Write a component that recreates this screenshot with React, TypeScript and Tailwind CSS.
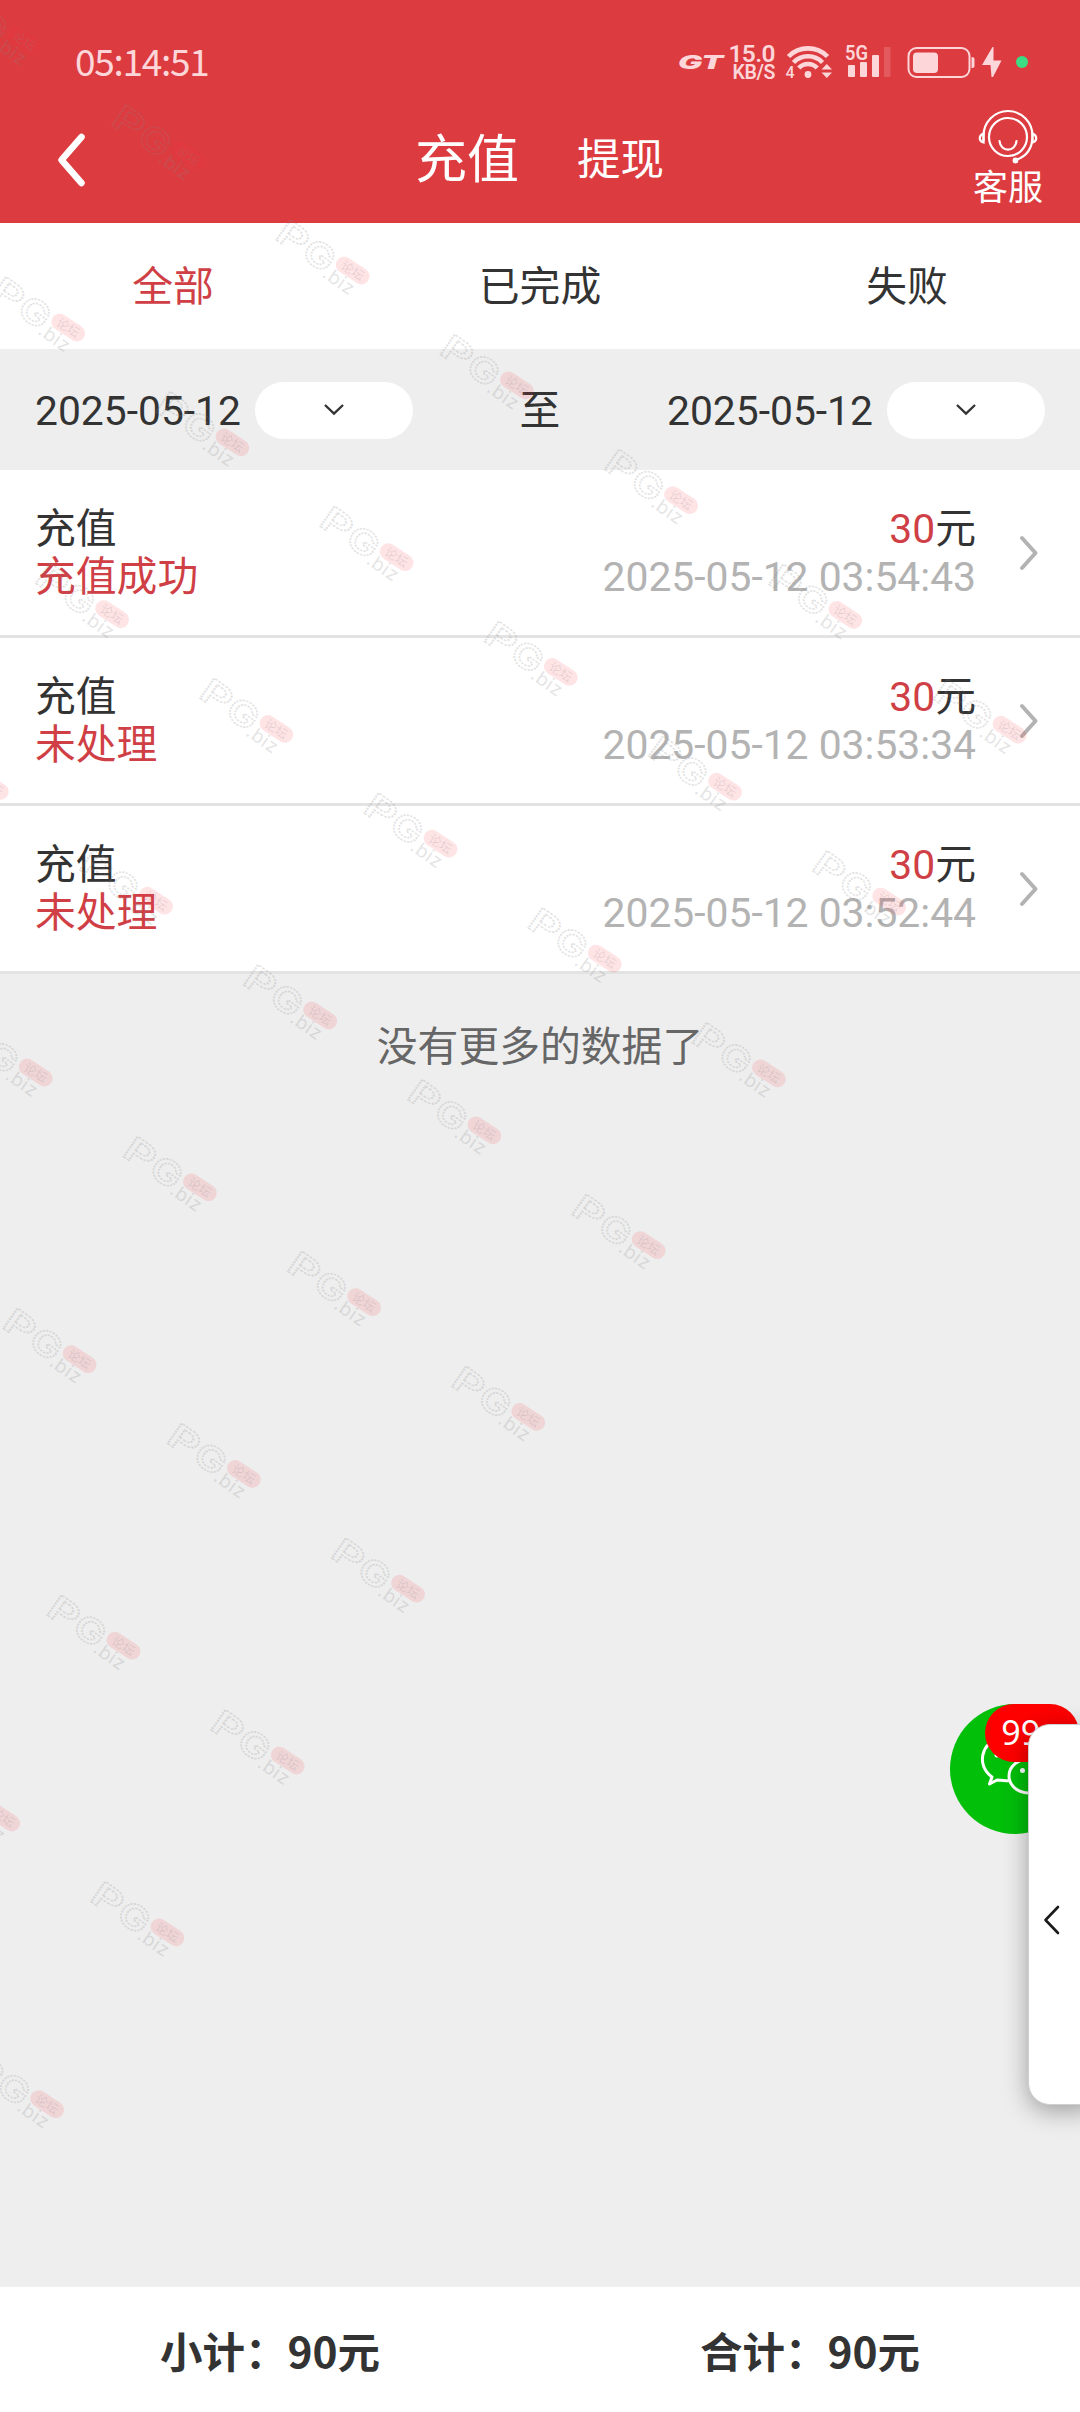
import { ReactNode } from 'react';

const records = [
  { type: '充值', status: '充值成功', amount: 30, time: '2025-05-12 03:54:43' },
  { type: '充值', status: '未处理', amount: 30, time: '2025-05-12 03:53:34' },
  { type: '充值', status: '未处理', amount: 30, time: '2025-05-12 03:52:44' },
];

const StatusBar = () => {
  return (
    <div className="flex h-[124px] items-center pl-[75px] pr-[52px] text-[#fcd6d8]">
      <div className="-mt-[3px] flex-1 font-['Noto_Sans_CJK_SC',sans-serif] text-[37px] leading-none tracking-[-1.300px]">
        05:14:51
      </div>
      <svg width="48" height="40" viewBox="0 0 48 40" fill="currentColor">
        <text
          transform="translate(0 27) scale(1.62 1)"
          fontFamily="Inter, sans-serif"
          fontSize="18.5"
          fontWeight="900"
          fontStyle="italic"
          textLength="28"
          lengthAdjust="spacingAndGlyphs"
        >
          GT
        </text>
      </svg>
      <div className="flex w-[50px] flex-col items-end pr-px font-[Roboto,sans-serif] font-semibold">
        <span className="text-[24.500px] leading-[21px] tracking-[-0.6px]">15.0</span>
        <span className="text-[19.500px] leading-[18px] tracking-[-0.4px]">KB/S</span>
      </div>
      <svg className="ml-[8px]" width="50" height="40" viewBox="0 0 50 40" fill="currentColor">
        <g fill="none" stroke="currentColor" strokeWidth="4.6">
          <path d="M4.5 14.5 A27.5 27.5 0 0 1 43.5 14.5" />
          <path d="M9.5 20.5 A20 20 0 0 1 38.5 20.5" />
          <path d="M14.8 26 A12.5 12.5 0 0 1 33.2 26" />
        </g>
        <circle cx="24" cy="32.5" r="3.4" />
        <text x="1.5" y="35.5" fontFamily="Roboto, sans-serif" fontSize="16" fontWeight="500">4</text>
        <path d="M37.5 27.5 L42.8 22 L48 27.5 Z" />
        <path d="M37.5 30.5 L42.8 36 L48 30.5 Z" />
      </svg>
      <svg className="ml-[11px]" width="50" height="40" viewBox="0 0 50 40" fill="currentColor">
        <text
          x="0"
          y="18"
          fontFamily="Roboto, sans-serif"
          fontSize="20"
          fontWeight="600"
          textLength="23"
          lengthAdjust="spacingAndGlyphs"
        >
          5G
        </text>
        <rect x="3" y="23" width="7" height="12" rx="1" />
        <rect x="15" y="20" width="7" height="15" rx="1" />
        <rect x="27" y="13" width="7" height="22" rx="1" />
        <rect x="39" y="5" width="6.500" height="30" rx="1" opacity="0.2" />
      </svg>
      <svg className="ml-[12px]" width="70" height="40" viewBox="0 0 70 40" fill="currentColor">
        <rect x="1.500" y="6" width="61" height="29" rx="8" fill="none" stroke="currentColor" strokeWidth="2" />
        <rect x="6" y="10.500" width="25" height="20.500" rx="4" />
        <path d="M64.500 15 Q67.500 15 67.500 17 V24 Q67.500 26 64.500 26 Z" />
      </svg>
      <svg className="ml-[4px]" width="24" height="40" viewBox="0 0 24 40" fill="currentColor">
        <path d="M11.500 5 L1 23 H9.500 L10.500 35 H12 L20.500 18.500 H12.500 L12.500 5 Z" />
      </svg>
      <div className="ml-[11px] h-3 w-3 rounded-full bg-[#3ddc84]"></div>
    </div>
  );
};

const Header = () => {
  return (
    <header className="h-[223px] bg-[#dc3b40] text-white">
      <StatusBar />
      <div className="-mt-[21px] flex h-[114px] items-center">
        <div className="w-[415px] pl-[54px]">
          <svg width="34" height="58" viewBox="0 0 34 58" fill="none" stroke="currentColor" strokeWidth="6.500" strokeLinecap="round" strokeLinejoin="round">
            <path d="M27.500 6 L7.500 29 L27.500 52" />
          </svg>
        </div>
        <div className="flex items-center gap-[58px] pt-[2px]">
          <span className="text-[52px] leading-none">充值</span>
          <span className="text-[43.500px] leading-none">提现</span>
        </div>
        <div className="flex flex-1 flex-col items-end pr-[36px]">
          <div className="-mt-[2px] flex w-[72px] flex-col items-center">
            <svg width="60" height="56" viewBox="0 0 60 56" fill="none" stroke="currentColor" strokeWidth="2.200" strokeLinecap="round">
              <circle cx="30" cy="28" r="19" />
              <path d="M5.500 32 V27 A24.500 25 0 0 1 54.500 27 C54.500 40 48 47.500 38 51" />
              <path d="M5.500 24.500 C0.500 26.500 0.500 32 5.500 33.500 Z" />
              <path d="M54.500 24.500 C59.500 26.500 59.500 32 54.500 33.500 Z" />
              <path d="M21.500 32 C22.500 43.500 37.500 43.500 38.500 32" />
              <circle cx="37.500" cy="51.500" r="1.800" fill="currentColor" />
            </svg>
            <span className="mt-1 text-[35px] leading-[40px]">客服</span>
          </div>
        </div>
      </div>
    </header>
  );
};

const Tabs = () => {
  return (
    <div className="grid h-[126px] grid-cols-[346px_388px_346px] items-center bg-white pt-[2px] text-center">
      <span className="text-[#cf3f45]">全部</span>
      <span>已完成</span>
      <span>失败</span>
    </div>
  );
};

const DatePicker = ({ value }: { value: string }) => {
  return (
    <div className="flex items-center pt-px">
      <span className="w-[220px] pt-[2px]">{value}</span>
      <div className="flex h-[57px] w-[158px] items-center justify-center rounded-full bg-white">
        <svg width="22" height="14" viewBox="0 0 22 14" fill="none" stroke="#333" strokeWidth="2.400">
          <path d="M2 2 L11 10.500 L20 2" />
        </svg>
      </div>
    </div>
  );
};

const Row = ({ left, right }: { left: ReactNode; right: ReactNode }) => {
  return (
    <li className="flex h-[168px] items-center border-b-[3px] border-[#e3e3e3] bg-white pl-[35px] pr-[40px] pt-px leading-[48px]">
      <div className="flex-1">{left}</div>
      <div className="text-right">{right}</div>
      <svg className="ml-[42px]" width="22" height="40" viewBox="0 0 22 40" fill="none" stroke="#b3b3b3" strokeWidth="4" strokeLinecap="round" strokeLinejoin="round">
        <path d="M4 5 L17.500 20 L4 35" />
      </svg>
    </li>
  );
};

const FloatingChat = () => {
  return (
    <>
      <div className="absolute left-[950px] top-[1704px] h-[130px] w-[130px] rounded-full bg-[#02bf0a]">
        <svg width="130" height="130" viewBox="0 0 130 130" fill="none" stroke="#fff" strokeWidth="3" strokeLinejoin="round">
          <path d="M60 76.500 C54 77.500 50 76 47 76 L39.500 80 L42 73 C26 62 31 38 50 34" />
          <ellipse cx="79" cy="72" rx="20" ry="17" />
          <circle cx="72.500" cy="66.500" r="2.500" fill="#fff" stroke="none" />
          <circle cx="47" cy="51" r="2.500" fill="#fff" stroke="none" />
        </svg>
      </div>
      <div className="absolute left-[985px] top-[1704px] flex h-[58px] w-[94px] items-center justify-center rounded-full bg-[#fe0000] pb-[3px] pr-[3px] font-['Noto_Sans',sans-serif] text-[34px] leading-none text-white">
        99+
      </div>
      <div className="absolute left-[1028px] top-[1724px] flex h-[381px] w-[72px] items-center rounded-[22px] border border-[#cfcfcf] bg-white pl-[14px] shadow-[0_6px_24px_rgba(0,0,0,0.34)]">
        <svg className="mt-[11px]" width="18" height="32" viewBox="0 0 18 32" fill="none" stroke="#1a1a1a" strokeWidth="2.600" strokeLinecap="round" strokeLinejoin="round">
          <path d="M15 3 L2.500 16 L15 29" />
        </svg>
      </div>
    </>
  );
};

// marks run down-right along each line; [line, first, last]
const markLines = [
  [0, -1, 5],
  [1, 0, 5],
  [2, 1, 5],
  [3, 1, 5],
  [4, 2, 5],
  [5, 3, 5],
  [6, 4, 5],
  [7, 4, 5],
  [8, 5, 5],
];

const Watermark = () => {
  return (
    <svg className="pointer-events-none absolute inset-0" width="1080" height="2412" viewBox="0 0 1080 2412">
      {markLines.map(([n, first, last]) =>
        Array.from({ length: last - first + 1 }, (_, i) => first + i).map((m) => (
          <g
            key={`${n}-${m}`}
            transform={`translate(${127 + m * 164.2 - n * 120.3} ${105 + m * 114.8 + n * 171.8}) rotate(35)`}
          >
            <g fill="none" stroke="#888" strokeOpacity="0.24" strokeWidth="1.6" strokeDasharray="2 1" fontFamily="Inter, sans-serif" fontWeight="600" fontSize="34">
              <text x="-4" y="25" textLength="31" lengthAdjust="spacingAndGlyphs">P</text>
              <text x="28" y="25" textLength="31" lengthAdjust="spacingAndGlyphs">G</text>
            </g>
            <text x="57" y="29" fill="#888" fillOpacity="0.22" fontFamily="Inter, sans-serif" fontSize="19" textLength="34">.biz</text>
            <g transform="rotate(-2 80 6)">
              <rect x="61" y="-2" width="37" height="16.500" rx="8.200" fill="#ff3040" fillOpacity="0.13" />
              <text x="67" y="11" fill="#888" fillOpacity="0.22" fontFamily="Noto Sans CJK SC, sans-serif" fontSize="12.500">论坛</text>
            </g>
          </g>
        ))
      )}
    </svg>
  );
};

const App = () => {
  return (
    <div className="relative flex h-[2412px] w-[1080px] flex-col overflow-hidden bg-[#eee] font-[Roboto,'Noto_Sans_CJK_SC',sans-serif] text-[40.800px] leading-none text-[#333]">
      <Header />
      <Tabs />
      <div className="flex h-[121px] items-center justify-between pl-[35px] pr-[35px]">
        <DatePicker value="2025-05-12" />
        <span className="pt-[3px]">至</span>
        <DatePicker value="2025-05-12" />
      </div>
      <ul>
        {records.map((r) => (
          <Row
            key={r.time}
            left={
              <>
                <div>{r.type}</div>
                <div className="text-[#cf3f45]">{r.status}</div>
              </>
            }
            right={
              <>
                <div>
                  <span className="text-[#cf3f45]">{r.amount}</span>元
                </div>
                <div className="text-[#b3b3b3]">{r.time}</div>
              </>
            }
          />
        ))}
      </ul>
      <p className="flex-1 pt-[53px] text-center text-[#666]">没有更多的数据了</p>
      <footer className="grid h-[125px] grid-cols-2 items-center bg-white pt-px text-center font-['Noto_Sans_CJK_SC',sans-serif] text-[42.500px] font-bold">
        <span>小计：90元</span>
        <span>合计：90元</span>
      </footer>
      <Watermark />
      <FloatingChat />
    </div>
  );
};

export default App;
